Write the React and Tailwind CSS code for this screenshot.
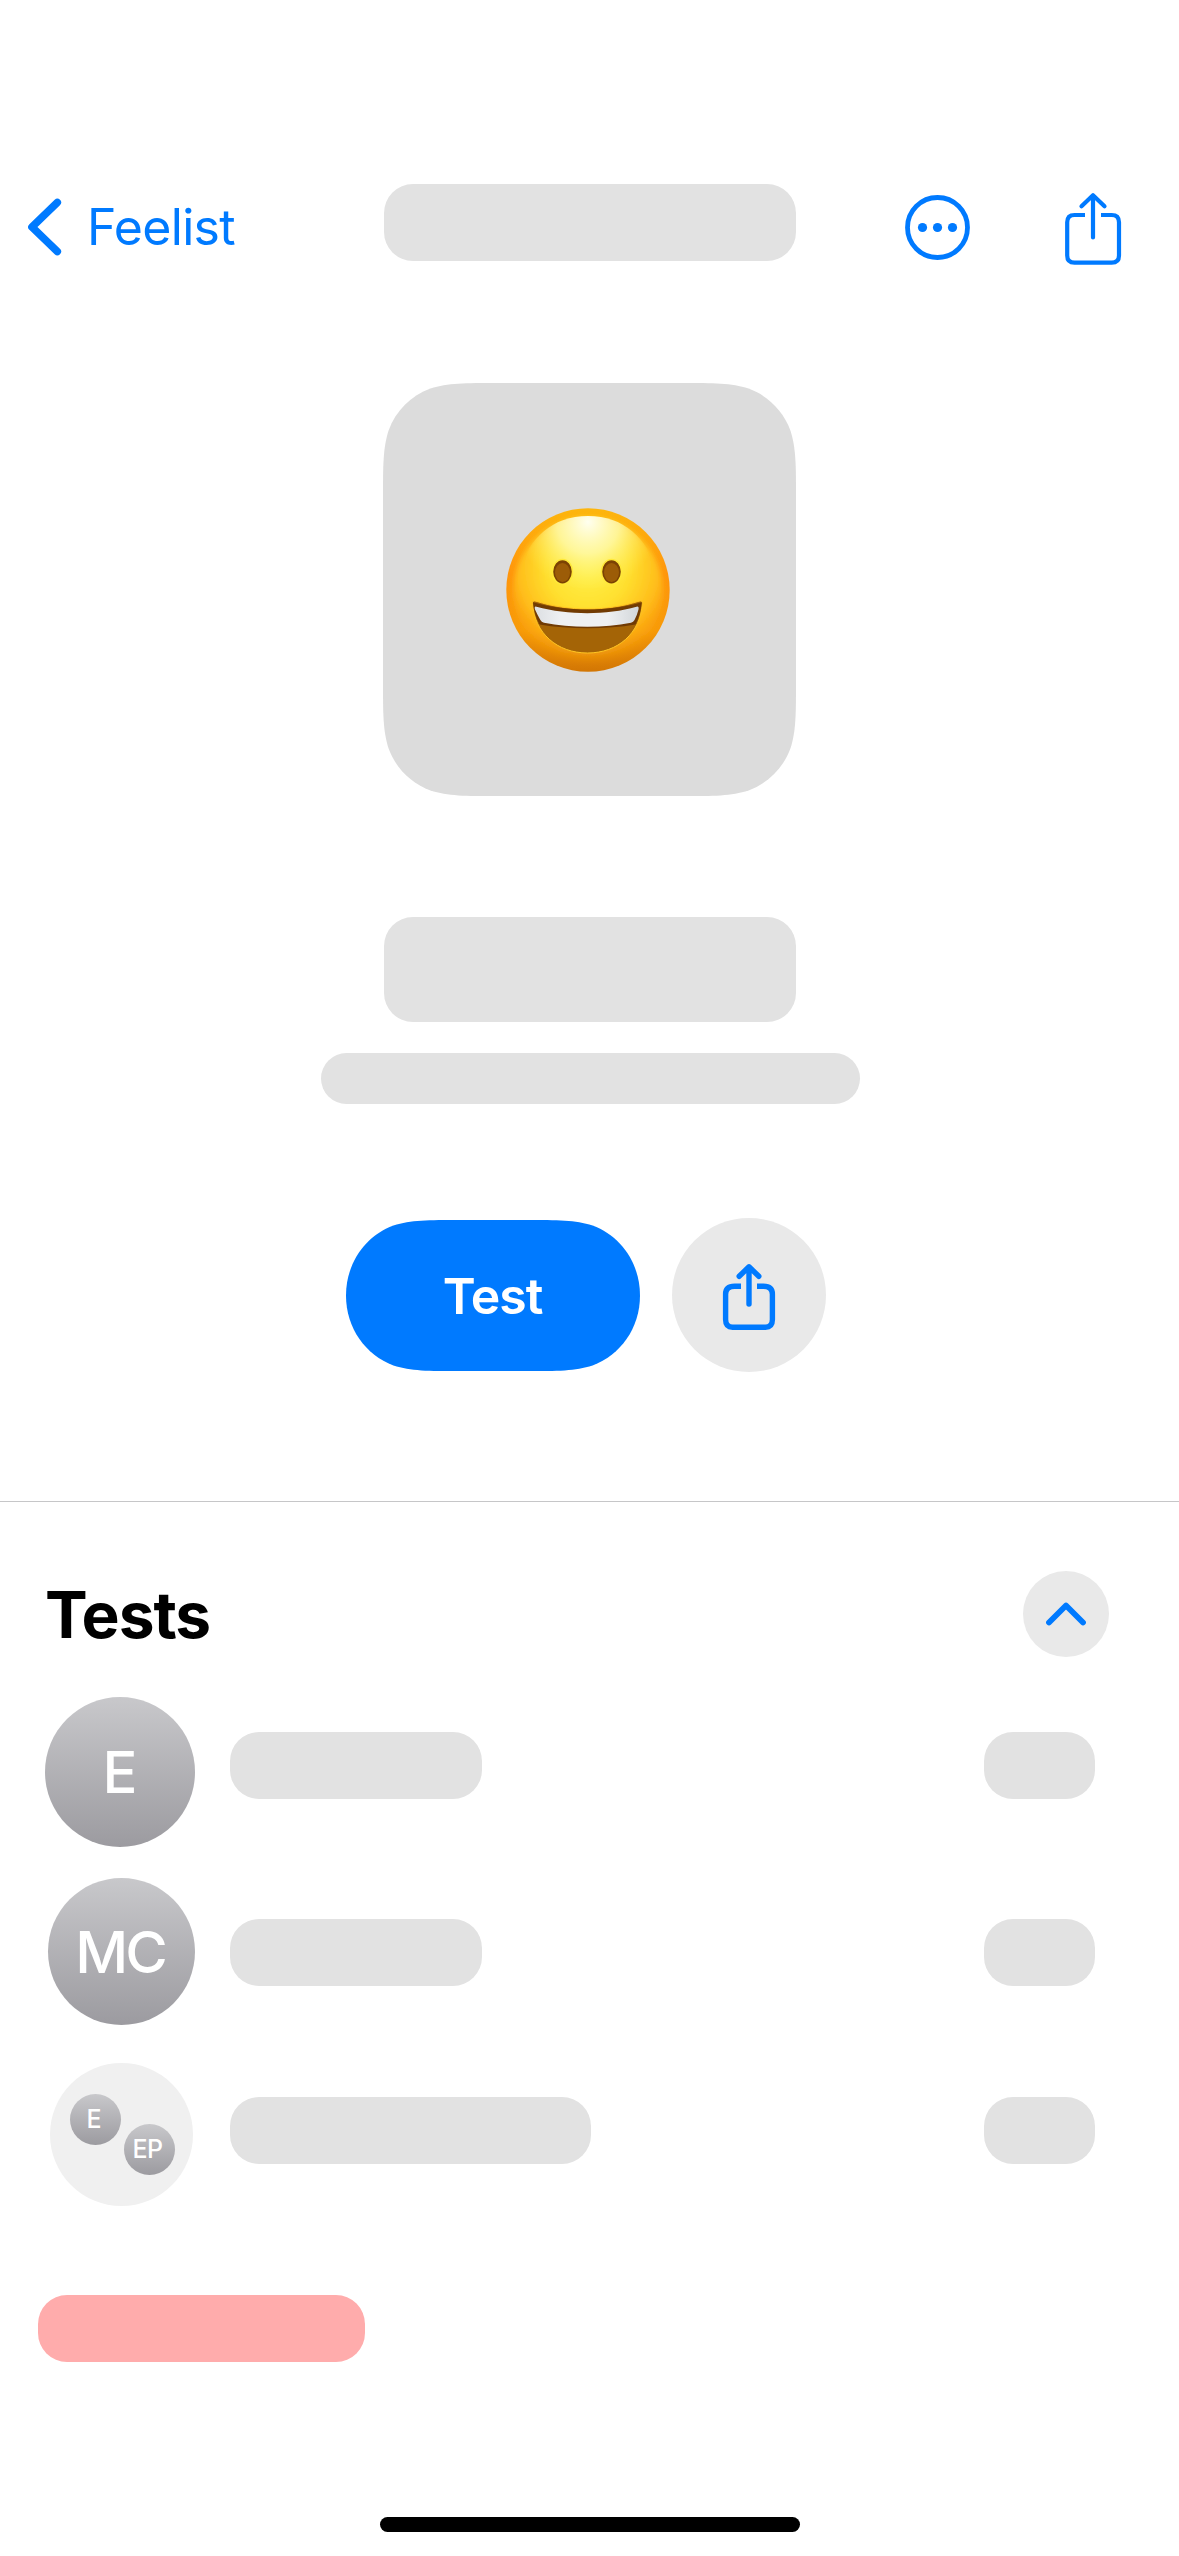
const BLUE = "#007aff";

function Placeholder({ className }) {
  return <div className={`shrink-0 rounded-[29px] bg-[#e2e2e2] ${className}`} />;
}

function ShareIcon({ className, heavy }) {
  return heavy ? (
    <svg className={className} viewBox="0 0 56 70" fill="none" stroke={BLUE} strokeWidth="5.4" strokeLinecap="round" strokeLinejoin="round">
      <path strokeLinecap="butt" d="M20 24.300H13.600Q4.600 24.300 4.600 32.300V57.600Q4.600 65.300 11.600 65.300H44.400Q51.400 65.300 51.400 57.600V32.300Q51.400 24.300 42.400 24.300H36" />
      <path d="M28 5V42M18.200 14.300L28 4.800L37.800 14.300" />
    </svg>
  ) : (
    <svg className={className} viewBox="0 0 58 74" fill="none" stroke={BLUE} strokeWidth="4.2" strokeLinecap="round" strokeLinejoin="round">
      <path strokeLinecap="butt" d="M21 23H10.500Q3.200 23 3.200 30.300V63.500Q3.200 70.700 10.500 70.700H47.700Q55 70.700 55 63.500V30.300Q55 23 47.700 23H37" />
      <path d="M29 3.500V45.500M17.500 14.300L29 3.200L40.500 14.300" />
    </svg>
  );
}

function GrinningFace() {
  return (
    <svg className="relative -left-[2px] h-[164px] w-[164px]" viewBox="0 0 164 164">
      <defs>
        <linearGradient id="rim" x1="0" y1="0" x2="0" y2="1">
          <stop offset="0" stopColor="#fdb60d" />
          <stop offset="0.4" stopColor="#ff950c" />
          <stop offset="0.75" stopColor="#f79a08" />
          <stop offset="1" stopColor="#d27604" />
        </linearGradient>
        <radialGradient id="face" gradientUnits="userSpaceOnUse" cx="82" cy="60" r="96">
          <stop offset="0" stopColor="#fff04a" />
          <stop offset="0.42" stopColor="#ffe02f" />
          <stop offset="0.74" stopColor="#ffbc1a" />
          <stop offset="1" stopColor="#fa9f0c" stopOpacity="0" />
        </radialGradient>
        <radialGradient id="shine" gradientUnits="userSpaceOnUse" cx="82" cy="14" r="70">
          <stop offset="0" stopColor="#fffff0" />
          <stop offset="0.45" stopColor="#fffbb0" stopOpacity="0.8" />
          <stop offset="1" stopColor="#fff35a" stopOpacity="0" />
        </radialGradient>
        <linearGradient id="teeth" x1="0" y1="0" x2="1" y2="0">
          <stop offset="0" stopColor="#dcdfe2" />
          <stop offset="0.25" stopColor="#eef0f2" />
          <stop offset="0.7" stopColor="#eef0f2" />
          <stop offset="1" stopColor="#d3d7da" />
        </linearGradient>
        <filter id="soft" x="-20%" y="-20%" width="140%" height="140%">
          <feGaussianBlur stdDeviation="2.6" />
        </filter>
      </defs>
      <circle cx="82" cy="82" r="81.7" fill="url(#rim)" />
      <ellipse cx="82" cy="83" rx="75" ry="74" fill="url(#face)" filter="url(#soft)" />
      <path d="M82 8C118 8 140 30 151 62C128 86 36 86 13 62C24 30 46 8 82 8Z" fill="url(#shine)" />
      <g stroke="#ffe93a" strokeWidth="1.4">
        <ellipse cx="56.5" cy="63.800" rx="10" ry="12.300" fill="#7b4203" />
        <ellipse cx="105.5" cy="63.800" rx="10" ry="12.300" fill="#7b4203" />
      </g>
      <ellipse cx="56.5" cy="64.500" rx="7.500" ry="9.600" fill="#9c5c07" />
      <ellipse cx="105.5" cy="64.500" rx="7.500" ry="9.600" fill="#9c5c07" />
      <path d="M26.500 95.500C26.400 93.200 27.600 92.600 30 93.200C63 103.600 100 103.600 133 93.200C135.400 92.600 136.400 93.200 136.300 95.500C134.500 125 112 145 81.500 145C51 145 28.500 125 26.500 95.500Z" fill="#a46406" stroke="#ffc524" strokeWidth="1" />
      <path d="M27 94.300C62 104 101 104 135.800 94.300C135 103 132.800 110 129.500 116.500C100 121.500 63 121.500 33.500 116.500C30 110 28 103 27 94.300Z" fill="#713b03" />
      <path d="M30.500 98.700C62 107.300 101 107.300 130.500 98.700Q133.200 98 132.500 101.500Q131 107.500 128.500 112Q127.400 114.200 125 114.700C98 120 65 120 38 114.700Q35.500 114.200 34.400 112Q31.500 107 29 101.500Q28 98 30.500 98.700Z" fill="url(#teeth)" />
    </svg>
  );
}

function Avatar({ className, children }) {
  return (
    <div className={`flex shrink-0 items-center justify-center rounded-full bg-linear-to-b from-[#c8c8cb] to-[#9c9ba0] font-medium leading-none text-white ${className}`}>
      {children}
    </div>
  );
}

export default function App() {
  return (
    <div className="flex h-[2556px] w-[1179px] flex-col overflow-hidden bg-white font-['Inter',sans-serif] text-black">
      <header className="mt-[184px] grid h-[77px] grid-cols-[384px_412px_1fr] items-start">
        <div className="flex items-center pl-[28px] pt-[14px]">
          <svg className="h-[58px] w-[34px]" viewBox="0 0 34 58" fill="none" stroke={BLUE} strokeWidth="7.6" strokeLinecap="round" strokeLinejoin="round">
            <path d="M29.300 4.500L4 29L29.300 53.500" />
          </svg>
          <span className="ml-[25px] text-[50px] leading-[58px] tracking-[-0.7px] text-[#007aff]">Feelist</span>
        </div>
        <Placeholder className="h-[77px] w-[412px]" />
        <div className="flex items-start pl-[108px] pt-[8px]">
          <svg className="mt-[2px] h-[67px] w-[67px]" viewBox="0 0 67 67" fill="none" stroke={BLUE} strokeWidth="4.800">
            <circle cx="33.500" cy="33.500" r="30" />
            <g fill={BLUE} stroke="none">
              <circle cx="18.500" cy="33.500" r="4.600" />
              <circle cx="33.500" cy="33.500" r="4.600" />
              <circle cx="48.500" cy="33.500" r="4.600" />
            </g>
          </svg>
          <ShareIcon className="ml-[93px] h-[74px] w-[58px]" />
        </div>
      </header>

      <section className="mt-[122px] flex flex-col items-center">
        <div className="grid h-[413px] w-[413px] place-items-center">
          <svg className="col-start-1 row-start-1 h-[413px] w-[413px]" viewBox="0 0 413 413" fill="#dcdcdc">
            <path d="M114.600 0H298.400C331.400 0 347.900 0 365.600 5.600C385 12.700 400.300 28 407.400 47.400C413 65.100 413 81.600 413 114.600V298.400C413 331.400 413 347.900 407.400 365.600C400.300 385 385 400.300 365.600 407.400C347.900 413 331.400 413 298.400 413H114.600C81.600 413 65.100 413 47.400 407.400C28 400.300 12.700 385 5.600 365.600C0 347.900 0 331.400 0 298.400V114.600C0 81.600 0 65.100 5.600 47.400C12.700 28 28 12.700 47.400 5.600C65.100 0 81.600 0 114.600 0Z" />
          </svg>
          <div className="col-start-1 row-start-1">
            <GrinningFace />
          </div>
        </div>
        <Placeholder className="ml-px mt-[121px] h-[105px] w-[412px]" />
        <Placeholder className="ml-[2px] mt-[31px] h-[51px] w-[539px]" />
        <div className="-ml-[7px] mt-[114px] flex w-[480px] items-center justify-between">
          <button className="grid h-[151px] w-[294px] place-items-center">
            <svg className="col-start-1 row-start-1 h-[151px] w-[294px]" viewBox="0 0 294 151" fill={BLUE}>
              <path d="M114.600 0H179.400C212.400 0 228.900 0 246.600 5.600C274.400 15.800 294 43 294 75.500C294 108 274.400 135.200 246.600 145.400C228.900 151 212.400 151 179.400 151H114.600C81.600 151 65.100 151 47.400 145.400C19.600 135.200 0 108 0 75.500C0 43 19.600 15.800 47.400 5.600C65.100 0 81.600 0 114.600 0Z" />
            </svg>
            <span className="col-start-1 row-start-1 pr-px pt-[2px] text-[50px] font-semibold leading-[60px] tracking-[-1.1px] text-white">Test</span>
          </button>
          <button className="flex h-[154px] w-[154px] items-center justify-center rounded-full bg-[#e9e9e9] pt-[3px]">
            <ShareIcon heavy className="h-[70px] w-[56px]" />
          </button>
        </div>
      </section>

      <hr className="mt-[129px] h-px border-0 bg-[#c6c6c8]" />

      <section className="flex flex-col">
        <div className="mt-[69px] flex h-[86px] items-center justify-between pl-[45px] pr-[70px]">
          <h2 className="pt-[2px] text-[64px] font-bold leading-[86px] tracking-[-1.1px]">Tests</h2>
          <button className="flex h-[86px] w-[86px] items-center justify-center rounded-full bg-[#e9e9e9]">
            <svg className="h-[24px] w-[40px]" viewBox="0 0 40 24" fill="none" stroke={BLUE} strokeWidth="5.800" strokeLinecap="round" strokeLinejoin="round">
              <path d="M3 20.500L20 3.500L37 20.500" />
            </svg>
          </button>
        </div>
        <div className="mt-[40px] flex h-[150px] pl-[45px] pr-[84px]">
          <Avatar className="h-[150px] w-[150px] text-[58px]">E</Avatar>
          <Placeholder className="ml-[35px] mt-[35px] h-[67px] w-[252px]" />
          <Placeholder className="ml-auto mt-[35px] h-[67px] w-[111px]" />
        </div>
        <div className="mt-[31px] flex h-[147px] pl-[48px] pr-[84px]">
          <Avatar className="h-[147px] w-[147px] pr-[3px] text-[58px] tracking-[-3px]">MC</Avatar>
          <Placeholder className="ml-[35px] mt-[41px] h-[67px] w-[252px]" />
          <Placeholder className="ml-auto mt-[41px] h-[67px] w-[111px]" />
        </div>
        <div className="mt-[38px] flex h-[144px] pl-[50px] pr-[84px]">
          <div className="flex h-[143px] w-[143px] shrink-0 rounded-full bg-[#f0f0f0] pl-[19.500px] pt-[31px]">
            <Avatar className="h-[51px] w-[51px] pr-[2px] text-[25px]">E</Avatar>
            <Avatar className="ml-[3px] mt-[30px] h-[51px] w-[51px] pr-[3px] text-[25px] tracking-[-0.500px]">EP</Avatar>
          </div>
          <Placeholder className="ml-[37px] mt-[34px] h-[67px] w-[361px]" />
          <Placeholder className="ml-auto mt-[34px] h-[67px] w-[111px]" />
        </div>
        <div className="ml-[38px] mt-[88px] h-[67px] w-[327px] rounded-[29px] bg-[#ffacac]" />
      </section>

      <div className="mx-auto mb-[24px] mt-auto h-[15px] w-[420px] rounded-full bg-black" />
    </div>
  );
}
